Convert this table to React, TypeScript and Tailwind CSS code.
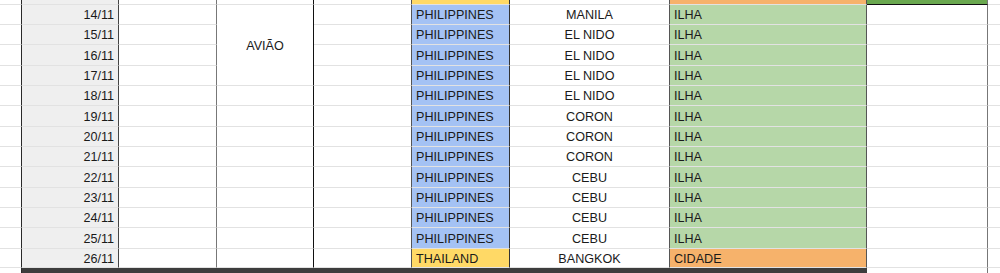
const days = [
  { date: '14/11', country: 'PHILIPPINES', city: 'MANILA', kind: 'ILHA' },
  { date: '15/11', country: 'PHILIPPINES', city: 'EL NIDO', kind: 'ILHA' },
  { date: '16/11', country: 'PHILIPPINES', city: 'EL NIDO', kind: 'ILHA' },
  { date: '17/11', country: 'PHILIPPINES', city: 'EL NIDO', kind: 'ILHA' },
  { date: '18/11', country: 'PHILIPPINES', city: 'EL NIDO', kind: 'ILHA' },
  { date: '19/11', country: 'PHILIPPINES', city: 'CORON', kind: 'ILHA' },
  { date: '20/11', country: 'PHILIPPINES', city: 'CORON', kind: 'ILHA' },
  { date: '21/11', country: 'PHILIPPINES', city: 'CORON', kind: 'ILHA' },
  { date: '22/11', country: 'PHILIPPINES', city: 'CEBU', kind: 'ILHA' },
  { date: '23/11', country: 'PHILIPPINES', city: 'CEBU', kind: 'ILHA' },
  { date: '24/11', country: 'PHILIPPINES', city: 'CEBU', kind: 'ILHA' },
  { date: '25/11', country: 'PHILIPPINES', city: 'CEBU', kind: 'ILHA' },
  { date: '26/11', country: 'THAILAND', city: 'BANGKOK', kind: 'CIDADE' },
]

// vertical sheet borders, one per column
const edge = [
  'border-r-[#2a2a2a]',
  'border-r-[#444]',
  'border-r-[#777]',
  'border-r-[#111]',
  'border-r-[#555]',
  'border-r-[#333]',
  'border-r-[#555]',
  'border-r-[#555]',
  'border-r-[#777]',
  'border-r-transparent',
]

const cell = 'border-r border-b border-b-[#e2e2e2] flex items-center pt-[2px] overflow-hidden whitespace-nowrap'

export default function App() {
  return (
    <div className="w-[1000px] h-[273px] overflow-hidden bg-white text-[12.6px] text-[#1a1a1a] font-['Liberation_Sans',Arial,sans-serif]">
      <div className="grid grid-cols-[22px_97px_98px_97px_98px_98px_160px_197px_121px_13px] grid-rows-[5px_20px_20px_21px_20px_20px_21px_20px_20px_21px_20px_20px_21px_19px_5px]">
        {/* partial row above */}
        <div className={`${cell} ${edge[0]}`} />
        <div className={`${cell} ${edge[1]} bg-[#efefef]`} />
        <div className={`${cell} ${edge[2]}`} />
        <div className={`${cell} ${edge[3]}`} />
        <div className={`${cell} ${edge[4]}`} />
        <div className={`${cell} ${edge[5]} bg-[#ffd966]`} />
        <div className={`${cell} ${edge[6]}`} />
        <div className={`${cell} ${edge[7]} bg-[#f6b26b]`} />
        <div className={`border-r border-b ${edge[8]} border-b-[#111] bg-[#6aa84f]`} />
        <div className={`${cell} ${edge[9]}`} />

        {days.map((d, i) => {
          const last = i === days.length - 1
          return (
            <div key={d.date} className="contents">
              <div className={`${cell} ${edge[0]}`} />
              <div className={`${cell} ${edge[1]} bg-[#efefef] justify-end pr-[4px]`}>{d.date}</div>
              <div className={`${cell} ${edge[2]}`} />
              {i === 0 && (
                <div className={`${cell} ${edge[3]} row-span-4 justify-center`}>AVIÃO</div>
              )}
              {i > 3 && <div className={`${cell} ${edge[3]}`} />}
              <div className={`${cell} ${edge[4]}`} />
              <div className={`${cell} ${edge[5]} pl-[4px] ${last ? 'bg-[#ffd966]' : 'bg-[#a4c2f4]'}`}>{d.country}</div>
              <div className={`${cell} ${edge[6]} justify-center`}>{d.city}</div>
              <div className={`${cell} ${edge[7]} pl-[4px] ${last ? 'bg-[#f6b26b]' : 'bg-[#b6d7a8]'}`}>{d.kind}</div>
              <div className={`${cell} ${edge[8]}`} />
              <div className={`${cell} ${edge[9]}`} />
            </div>
          )
        })}

        {/* heavy bottom border */}
        <div className={`border-r ${edge[0]}`} />
        <div className="col-span-7 bg-[#3d3d3d]" />
        <div className={`border-r ${edge[8]}`} />
        <div />
      </div>
    </div>
  )
}
